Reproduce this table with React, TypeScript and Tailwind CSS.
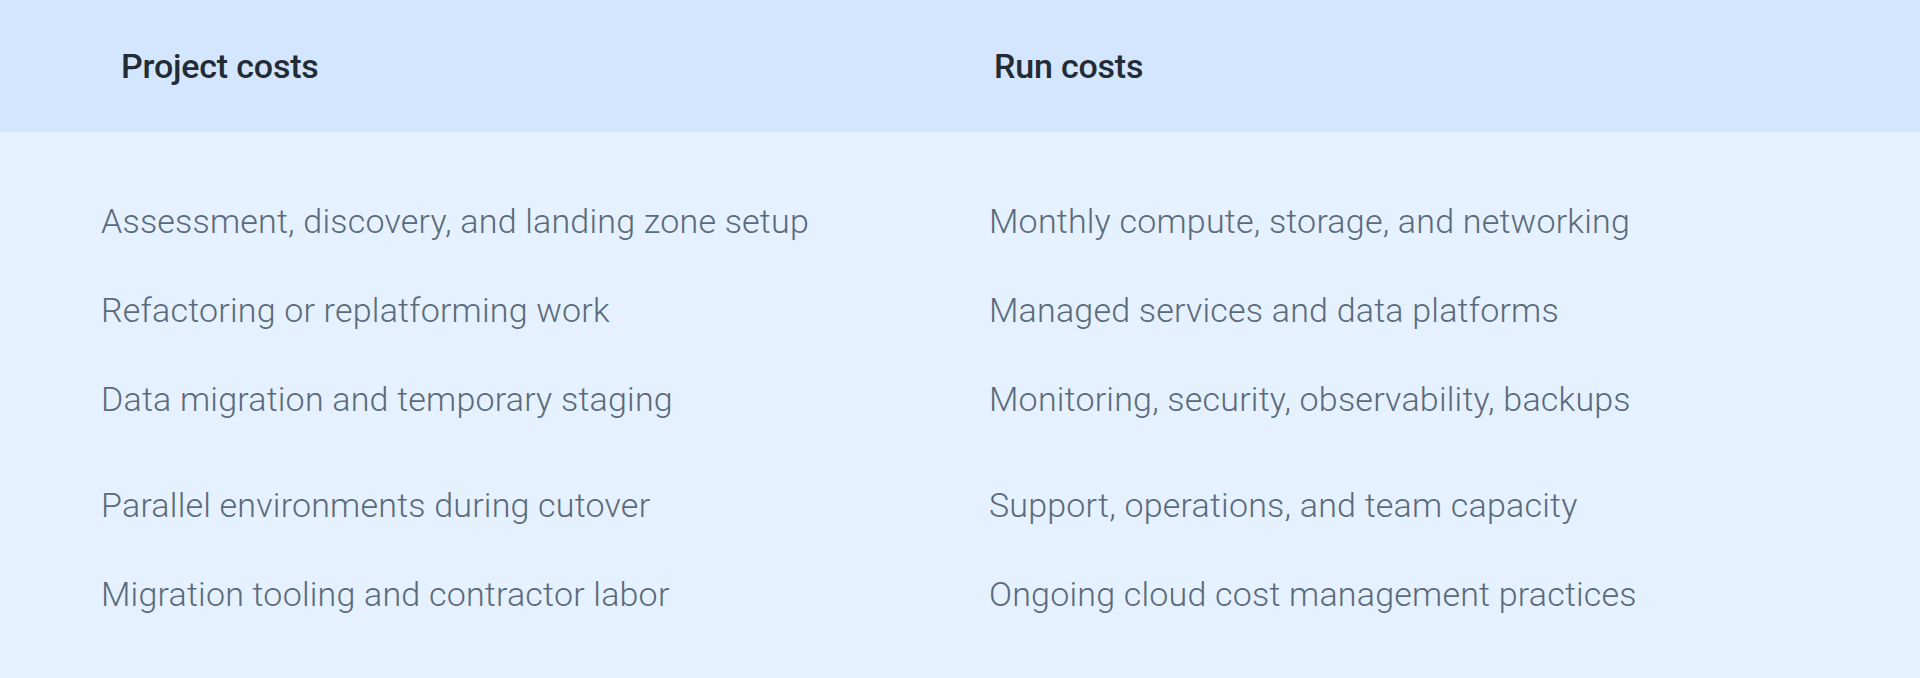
const rows: { project: string; run: string; gap?: boolean }[] = [
  { project: 'Assessment, discovery, and landing zone setup', run: 'Monthly compute, storage, and networking' },
  { project: 'Refactoring or replatforming work', run: 'Managed services and data platforms' },
  { project: 'Data migration and temporary staging', run: 'Monitoring, security, observability, backups' },
  { project: 'Parallel environments during cutover', run: 'Support, operations, and team capacity', gap: true },
  { project: 'Migration tooling and contractor labor', run: 'Ongoing cloud cost management practices' },
];

export default function App() {
  return (
    <div className="w-full h-[678px] bg-[#e5f1fe] font-['Roboto',sans-serif] overflow-hidden">
      <div className="grid grid-cols-2 h-[132px] bg-[#d3e6fd] items-center">
        <div className="pl-[121px] text-[34px] font-medium text-[#232b35] tracking-[-0.2px]">Project costs</div>
        <div className="pl-[34px] text-[34px] font-medium text-[#232b35] tracking-[-0.2px]">Run costs</div>
      </div>
      <div className="pt-[45px]">
        {rows.map((r) => (
          <div
            key={r.project}
            className={`grid grid-cols-2 items-center h-[89px] ${r.gap ? 'mt-[17px]' : ''}`}
          >
            <div className="pl-[101px] text-[34px] font-light text-[#5b6a7b] tracking-[0.2px]">{r.project}</div>
            <div className="pl-[29px] text-[34px] font-light text-[#5b6a7b] tracking-[0.2px]">{r.run}</div>
          </div>
        ))}
      </div>
    </div>
  );
}
